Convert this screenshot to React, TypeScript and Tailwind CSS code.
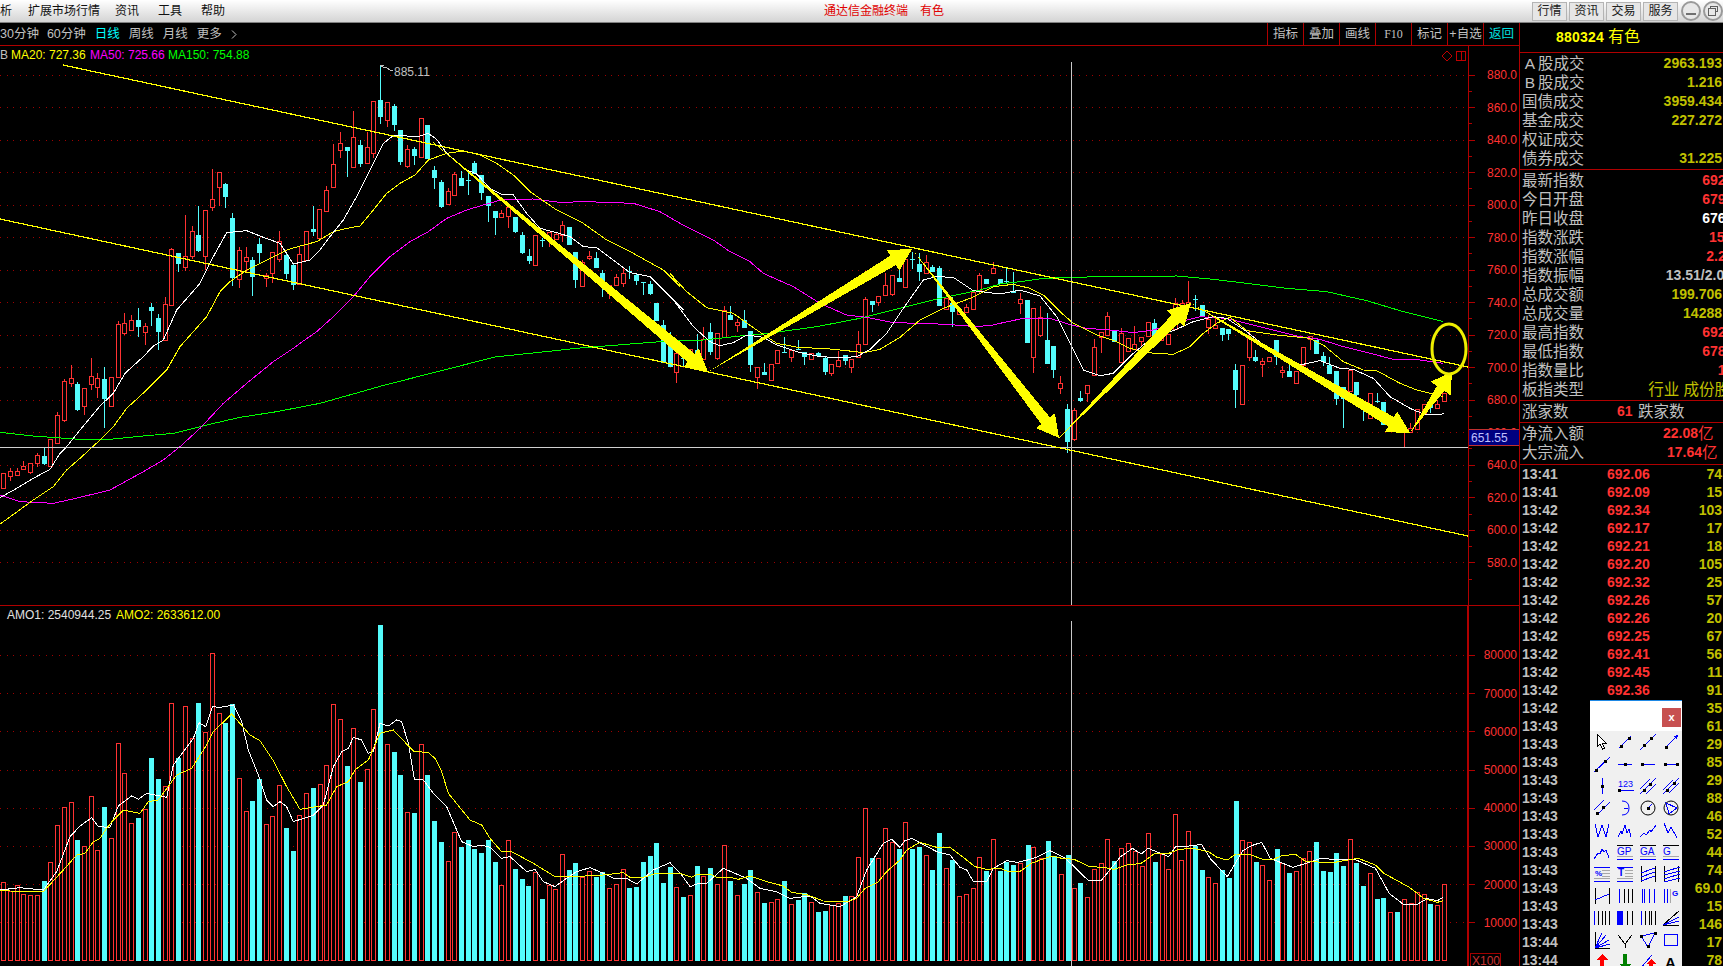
import { Fragment, type ReactNode } from "react";

// everything in the chart is in screen pixels; the numbers below were read off 3x crops,
// so each series keeps the crop origin and gets converted once
type Candle = [number, number, number, number, number, number];

const RED = "#ff3232";
const CYAN = "#54fcfc";
const LINE_RED = "#b00000";
// the right-hand volume crop came back slightly narrower than 3x
const WIDE_CROP = 1568 / 540;

function candles(x0: number, y0: number, rows: Candle[]) {
  return rows.map(([zx, hi, top, bot, lo, up]) => ({
    x: Math.round(x0 + zx / 3),
    hi: hi ? y0 + hi / 3 : 0,
    top: y0 + top / 3,
    bot: y0 + bot / 3,
    lo: lo ? y0 + lo / 3 : 0,
    up: up === 1,
  }));
}

function zoomPts(x0: number, y0: number, flat: number[], sx = 3) {
  const out: string[] = [];
  for (let i = 0; i < flat.length; i += 2) {
    out.push(`${x0 + flat[i] / sx},${y0 + flat[i + 1] / 3}`);
  }
  return out.join(" ");
}

const CANDLES = [
  ...candles(0, 160, [
    [10, 0, 940, 983, 0, 1], [31, 925, 933, 949, 962, 1], [52, 924, 934, 946, 0, 1], [70, 904, 919, 928, 0, 1],
    [91, 0, 910, 935, 941, 1], [112, 880, 884, 908, 920, 1], [133, 865, 888, 912, 915, 0], [151, 0, 838, 917, 0, 1],
    [172, 757, 766, 848, 0, 1], [193, 657, 664, 779, 785, 1], [214, 615, 655, 670, 680, 1], [232, 667, 672, 750, 752, 0],
    [253, 0, 685, 739, 765, 1], [274, 595, 649, 673, 690, 1], [292, 640, 655, 680, 713, 1], [313, 622, 657, 717, 803, 0],
    [334, 0, 652, 737, 0, 1], [355, 484, 493, 650, 0, 1], [373, 460, 490, 518, 525, 1], [394, 465, 481, 509, 512, 1],
    [415, 445, 481, 500, 530, 0], [436, 490, 499, 517, 555, 1], [454, 430, 441, 453, 498, 0], [475, 462, 474, 515, 570, 0],
    [496, 410, 433, 539, 0, 1], [514, 265, 268, 434, 0, 1], [535, 0, 280, 311, 335, 0], [556, 165, 287, 320, 332, 1],
    [577, 198, 214, 287, 298, 1], [595, 138, 226, 273, 276, 0], [616, 0, 151, 287, 330, 1], [637, 28, 118, 142, 152, 1],
    [658, 0, 37, 80, 138, 1], [676, 68, 72, 110, 143, 0], [697, 160, 174, 354, 378, 0], [718, 262, 271, 358, 384, 1],
    [739, 262, 292, 302, 340, 1], [757, 292, 300, 350, 408, 0], [778, 235, 252, 278, 310, 0], [799, 338, 346, 353, 380, 1],
    [817, 0, 277, 340, 368, 1], [838, 213, 244, 298, 305, 1], [859, 280, 285, 341, 357, 0], [880, 312, 315, 376, 390, 0],
    [898, 260, 283, 373, 0, 1], [919, 0, 214, 300, 0, 1], [940, 138, 207, 215, 228, 0], [958, 0, 148, 233, 0, 1],
  ]),
  ...candles(300, 50, [
    [79, 408, 421, 482, 0, 1], [100, 282, 343, 410, 0, 1], [121, 247, 280, 301, 323, 1], [142, 0, 292, 302, 380, 0],
    [160, 183, 262, 352, 355, 1], [181, 270, 285, 342, 350, 0], [202, 247, 292, 338, 0, 1], [220, 0, 154, 310, 325, 1],
    [241, 45, 151, 200, 222, 0], [262, 0, 157, 211, 232, 1], [283, 162, 168, 224, 243, 0], [301, 0, 240, 335, 345, 0],
    [322, 285, 298, 348, 353, 1], [343, 290, 298, 317, 345, 0], [364, 0, 205, 320, 0, 1], [382, 0, 226, 327, 0, 0],
    [403, 348, 360, 384, 417, 0], [424, 390, 396, 470, 473, 0], [445, 415, 424, 461, 0, 1], [463, 367, 372, 434, 0, 1],
    [484, 362, 384, 408, 0, 0], [505, 363, 391, 391, 435, 0], [523, 333, 339, 372, 0, 0], [544, 0, 376, 428, 450, 0],
    [565, 0, 438, 468, 515, 0], [586, 0, 484, 503, 555, 0], [604, 480, 490, 502, 0, 1], [625, 460, 470, 497, 533, 1],
    [646, 0, 501, 546, 548, 0], [667, 547, 555, 609, 612, 0], [688, 598, 618, 634, 641, 0], [706, 0, 556, 644, 0, 1],
    [727, 565, 571, 571, 590, 0], [748, 0, 546, 566, 590, 1], [769, 545, 553, 567, 0, 1], [787, 514, 526, 555, 576, 1],
    [808, 0, 531, 584, 0, 0], [826, 0, 606, 689, 713, 0], [847, 630, 637, 707, 0, 1], [868, 603, 619, 623, 630, 1],
    [889, 607, 624, 653, 0, 0], [907, 660, 670, 712, 740, 0], [928, 0, 705, 730, 748, 1], [949, 673, 682, 704, 0, 1],
    [970, 655, 670, 700, 710, 1], [988, 648, 664, 664, 688, 0], [1009, 670, 674, 692, 705, 0], [1030, 0, 697, 697, 735, 0],
    [1051, 694, 702, 731, 735, 0], [1069, 0, 759, 813, 0, 0],
  ]),
  ...candles(660, 230, [
    [10, 270, 285, 400, 0, 0], [31, 306, 322, 412, 0, 0], [49, 0, 370, 425, 460, 1], [70, 360, 383, 383, 410, 0],
    [91, 0, 358, 400, 0, 1], [112, 313, 360, 400, 0, 0], [130, 290, 326, 388, 0, 1], [151, 280, 306, 366, 375, 0],
    [172, 0, 310, 384, 390, 1], [193, 228, 241, 322, 0, 1], [211, 228, 256, 270, 0, 0], [232, 268, 276, 284, 305, 1],
    [253, 240, 270, 294, 0, 0], [271, 0, 304, 404, 425, 0], [292, 0, 412, 440, 476, 1], [313, 400, 426, 434, 0, 0],
    [334, 0, 402, 449, 0, 1], [352, 0, 361, 398, 0, 1], [373, 320, 365, 365, 0, 0], [394, 0, 360, 380, 395, 1],
    [415, 330, 356, 356, 0, 0], [433, 0, 366, 380, 405, 0], [454, 0, 370, 386, 0, 1], [475, 365, 368, 378, 0, 0],
    [496, 377, 385, 426, 435, 0], [514, 0, 403, 428, 438, 1], [535, 362, 391, 408, 412, 1], [556, 0, 376, 392, 404, 0],
    [574, 0, 386, 410, 430, 1], [595, 304, 343, 380, 0, 1], [616, 202, 208, 341, 0, 1], [637, 0, 212, 224, 245, 0],
    [655, 0, 199, 216, 228, 1], [676, 130, 166, 196, 0, 1], [697, 0, 136, 191, 198, 1], [718, 115, 144, 157, 0, 0],
    [736, 0, 88, 172, 0, 1], [757, 66, 88, 88, 118, 0], [778, 68, 102, 125, 153, 0], [799, 75, 95, 130, 0, 1],
    [817, 105, 112, 126, 0, 0], [838, 108, 114, 228, 0, 0], [859, 0, 205, 238, 0, 1], [877, 200, 220, 245, 290, 0],
    [898, 0, 240, 253, 0, 1], [919, 222, 232, 245, 0, 1], [940, 0, 187, 236, 0, 1], [958, 128, 136, 179, 188, 1],
    [979, 0, 148, 162, 0, 0], [1000, 95, 115, 128, 0, 1], [1021, 0, 148, 163, 0, 0], [1039, 112, 152, 152, 160, 0],
    [1060, 125, 182, 188, 0, 0],
  ]),
  ...candles(1000, 240, [
    [61, 160, 178, 190, 222, 1], [82, 0, 180, 308, 0, 0], [100, 0, 205, 352, 400, 1], [121, 198, 232, 285, 290, 1],
    [142, 220, 300, 372, 0, 0], [160, 0, 318, 390, 413, 0], [181, 408, 430, 443, 461, 1], [202, 492, 507, 606, 640, 0],
    [223, 505, 511, 598, 604, 1], [241, 452, 475, 484, 486, 0], [262, 0, 435, 460, 486, 1], [283, 297, 322, 404, 407, 1],
    [304, 0, 275, 292, 338, 1], [322, 216, 229, 285, 0, 1], [343, 0, 272, 307, 0, 0], [364, 265, 280, 365, 0, 1],
    [385, 0, 295, 332, 0, 1], [403, 258, 311, 328, 0, 1], [424, 0, 290, 302, 322, 1], [445, 0, 245, 288, 0, 1],
    [463, 238, 250, 288, 0, 0], [484, 0, 280, 300, 0, 1], [505, 0, 282, 312, 0, 1], [526, 175, 190, 268, 0, 1],
    [547, 180, 190, 215, 0, 1], [565, 123, 185, 195, 0, 1], [586, 165, 176, 176, 212, 0], [607, 0, 195, 232, 0, 0],
    [625, 225, 238, 260, 282, 1], [646, 235, 256, 263, 0, 1], [667, 0, 265, 285, 302, 0], [685, 0, 267, 282, 300, 0],
    [706, 372, 390, 450, 505, 0], [727, 0, 376, 491, 0, 1], [748, 270, 290, 350, 362, 1], [766, 330, 351, 362, 367, 0],
    [787, 353, 364, 371, 410, 1], [808, 0, 352, 362, 0, 1], [829, 0, 300, 350, 375, 0], [847, 378, 390, 397, 413, 1],
    [868, 375, 393, 410, 0, 0], [889, 0, 394, 428, 0, 1], [910, 0, 322, 375, 0, 1], [931, 0, 287, 297, 330, 1],
    [949, 0, 300, 343, 0, 0], [970, 337, 348, 365, 378, 0], [988, 352, 376, 402, 0, 0], [1009, 0, 393, 476, 495, 0],
    [1030, 0, 440, 478, 563, 0], [1051, 0, 390, 452, 0, 1], [1069, 0, 426, 466, 478, 0], [1090, 0, 485, 510, 543, 0],
    [1111, 0, 460, 533, 0, 1], [1132, 460, 482, 482, 490, 0], [1150, 0, 486, 555, 0, 0], [1171, 0, 530, 550, 0, 1],
    [1192, 0, 525, 560, 0, 0], [1213, 0, 560, 575, 620, 1], [1231, 548, 565, 575, 0, 1], [1252, 0, 506, 568, 0, 1],
    [1273, 0, 491, 522, 0, 1], [1291, 0, 490, 505, 520, 0], [1312, 480, 493, 503, 507, 1], [1333, 0, 460, 482, 0, 1],
  ]),
];

const MA10 = [
  zoomPts(0, 160, [0, 1013, 50, 985, 100, 955, 150, 928, 180, 880, 200, 860, 240, 810, 300, 738, 340, 700, 375, 640, 430, 590, 460, 558, 490, 540, 530, 450, 600, 370, 640, 290, 680, 218, 740, 212, 790, 232, 840, 250, 880, 312, 930, 300]),
  zoomPts(300, 50, [60, 600, 90, 560, 130, 510, 170, 440, 210, 360, 250, 280, 280, 257, 320, 258, 360, 258, 385, 250, 410, 268, 440, 310, 500, 360, 530, 372, 570, 415, 605, 433, 640, 435, 680, 490, 720, 535, 770, 548, 810, 560, 850, 590, 890, 593, 940, 630, 990, 668, 1050, 680, 1100, 730, 1150, 780]),
  zoomPts(660, 230, [40, 210, 100, 290, 150, 335, 180, 347, 220, 338, 260, 315, 310, 322, 350, 345, 420, 368, 480, 380, 540, 383, 590, 380, 630, 358, 680, 310, 730, 235, 790, 150, 830, 140, 880, 142, 940, 182, 1020, 192]),
  zoomPts(1000, 240, [60, 150, 120, 168, 170, 230, 215, 320, 250, 390, 300, 407, 340, 400, 400, 340, 460, 290, 520, 272, 580, 245, 640, 230, 680, 235, 740, 275, 810, 330, 900, 375, 960, 362, 1020, 385, 1060, 388, 1120, 415, 1170, 470, 1230, 505, 1270, 522, 1320, 525, 1332, 520]),
].join(" ");

const MA20 = [
  zoomPts(0, 160, [0, 1092, 20, 1078, 100, 1020, 160, 980, 200, 930, 240, 895, 300, 840, 340, 800, 380, 745, 440, 690, 500, 630, 540, 560, 620, 470, 660, 395, 690, 365, 740, 330, 800, 300, 860, 270]),
  zoomPts(300, 50, [0, 588, 50, 575, 100, 545, 140, 535, 180, 528, 220, 480, 260, 430, 300, 400, 345, 375, 385, 330, 440, 310, 490, 303, 540, 315, 590, 340, 640, 375, 690, 425, 770, 480, 850, 520, 920, 570, 1000, 610, 1090, 660, 1140, 710]),
  zoomPts(660, 230, [30, 130, 80, 185, 140, 233, 220, 250, 290, 300, 350, 340, 420, 353, 490, 355, 560, 362, 610, 368, 660, 358, 720, 322, 780, 270, 850, 235, 930, 205, 1000, 170]),
  zoomPts(1000, 240, [40, 133, 90, 145, 130, 165, 180, 215, 220, 250, 290, 285, 350, 305, 390, 325, 440, 338, 520, 343, 570, 320, 610, 280, 650, 250, 690, 232, 740, 272, 830, 285, 880, 290, 930, 295, 970, 315, 1030, 365, 1090, 390, 1130, 392, 1200, 430, 1250, 450, 1330, 470]),
].join(" ");

const MA50 = [
  zoomPts(0, 160, [0, 1005, 60, 1025, 160, 1030, 240, 1012, 330, 990, 430, 935, 490, 900, 540, 860, 600, 805, 670, 730, 740, 670, 820, 605, 880, 565]),
  zoomPts(300, 50, [0, 880, 50, 845, 100, 800, 160, 740, 210, 680, 270, 620, 330, 575, 385, 545, 440, 505, 500, 480, 560, 462, 610, 448, 700, 447, 780, 457, 860, 455, 1000, 460, 1080, 485, 1140, 520]),
  zoomPts(660, 230, [100, 0, 160, 30, 210, 65, 270, 95, 310, 130, 400, 170, 480, 220, 560, 255, 620, 262, 700, 278, 780, 280, 860, 283, 950, 290, 1000, 285]),
  zoomPts(1000, 240, [0, 250, 70, 235, 150, 235, 215, 255, 260, 265, 330, 270, 400, 278, 460, 270, 540, 245, 600, 230, 680, 235, 800, 265, 900, 290, 960, 298, 1030, 320, 1130, 345, 1180, 358, 1260, 360, 1330, 370]),
].join(" ");

const MA150 = [
  zoomPts(0, 160, [0, 817, 100, 828, 240, 838, 330, 838, 430, 828, 520, 820, 620, 795, 720, 772, 830, 755, 960, 730]),
  "385,385 495,357 580,348",
  zoomPts(660, 230, [0, 335, 130, 330, 240, 318, 310, 312, 470, 290, 600, 265, 720, 235, 840, 205, 960, 180]),
  zoomPts(1000, 240, [0, 132, 60, 125, 130, 115, 215, 112, 310, 110, 530, 108, 640, 118, 740, 130, 860, 145, 980, 155, 1100, 182, 1200, 212, 1330, 245]),
].join(" ");

const VOL_WHITE = [
  zoomPts(0, 590, [0, 900, 60, 893, 130, 900, 170, 845, 210, 740, 240, 708, 275, 683, 295, 710, 330, 712, 355, 648, 395, 618, 415, 628, 440, 610, 500, 622, 520, 525, 580, 445, 597, 398, 617, 410, 637, 350, 660, 352, 700, 345, 725, 395, 745, 480, 775, 555, 800, 630, 820, 650, 840, 635, 860, 650, 880, 695, 940, 676, 970, 645, 1000, 530, 1025, 485, 1045, 475, 1060, 442, 1085, 450, 1105, 490, 1120, 485, 1140, 400, 1165, 408, 1190, 390, 1205, 395, 1225, 460, 1243, 568, 1270, 570, 1300, 610, 1340, 650, 1385, 755, 1420, 770, 1445, 765]),
  zoomPts(490, 760, [0, 262, 35, 295, 60, 290, 110, 335, 135, 328, 160, 365, 195, 380, 225, 358, 260, 335, 300, 323, 340, 340, 370, 355, 410, 355, 440, 372, 490, 330, 540, 308, 575, 345, 600, 380, 625, 370, 650, 370, 700, 325, 770, 355, 810, 385, 860, 395, 900, 415, 960, 408, 990, 430, 1050, 440, 1100, 410, 1130, 330, 1180, 250, 1205, 238, 1230, 262, 1245, 242, 1265, 235, 1340, 275, 1380, 285, 1410, 322, 1430, 330, 1450, 365, 1490, 365, 1510, 325]),
  zoomPts(1000, 760, [20, 302, 50, 307, 80, 300, 110, 290, 145, 272, 190, 295, 255, 360, 295, 360, 350, 290, 385, 265, 410, 282, 430, 265, 490, 290, 510, 260, 550, 258, 585, 253, 610, 295, 660, 350, 705, 272, 730, 257, 760, 247, 785, 295, 850, 322, 895, 308, 930, 296, 980, 298, 1030, 298, 1090, 325, 1130, 400, 1170, 432, 1210, 434, 1240, 416, 1270, 422, 1287, 412], WIDE_CROP),
].join(" ");

const VOL_YELLOW = [
  zoomPts(0, 590, [0, 900, 30, 903, 130, 905, 190, 840, 230, 795, 255, 790, 280, 755, 300, 745, 320, 715, 340, 690, 370, 660, 420, 670, 445, 635, 475, 630, 530, 555, 575, 535, 620, 465, 640, 425, 695, 372, 750, 435, 780, 452, 820, 512, 860, 590, 900, 658, 980, 645, 1010, 590, 1045, 575, 1065, 540, 1105, 510, 1140, 430, 1180, 420, 1240, 483, 1285, 488, 1305, 505, 1325, 545, 1345, 610, 1410, 690, 1445, 705]),
  zoomPts(490, 760, [0, 235, 35, 275, 65, 275, 130, 310, 195, 350, 250, 350, 340, 345, 400, 338, 420, 352, 460, 352, 500, 340, 570, 340, 605, 352, 625, 342, 660, 342, 680, 352, 720, 352, 745, 358, 780, 348, 830, 365, 880, 378, 905, 397, 950, 404, 1000, 423, 1070, 425, 1100, 415, 1125, 385, 1165, 365, 1190, 335, 1230, 300, 1250, 270, 1290, 247, 1340, 262, 1380, 262, 1420, 292, 1455, 320, 1490, 328, 1530, 325]),
  zoomPts(1000, 760, [20, 333, 60, 333, 90, 310, 150, 288, 180, 295, 215, 298, 260, 320, 300, 322, 330, 328, 370, 315, 410, 310, 450, 280, 490, 280, 520, 268, 560, 265, 605, 275, 630, 292, 660, 300, 685, 282, 725, 283, 760, 297, 790, 300, 820, 286, 860, 284, 885, 303, 960, 309, 1040, 295, 1090, 315, 1115, 340, 1150, 360, 1190, 383, 1230, 415, 1270, 427, 1287, 422], WIDE_CROP),
].join(" ");

// [crop x, crop y of the bar top, 1 = red outline]
const VOL_BARS: { x: number; top: number; up: boolean }[] = [
  ...volGroup(0, 590, [10, 875, 1, 30, 903, 1, 52, 884, 1, 70, 913, 1, 91, 916, 1, 112, 916, 1, 133, 873, 0, 151, 815, 1, 172, 706, 1, 193, 650, 1, 214, 635, 1, 232, 750, 0, 253, 769, 1, 274, 617, 1, 292, 781, 1, 313, 651, 0, 334, 745, 1, 355, 458, 1, 373, 550, 1, 394, 700, 1, 415, 684, 0, 436, 658, 1, 454, 504, 0, 475, 567, 0, 496, 588, 1, 514, 340, 1, 535, 504, 0, 556, 349, 1, 577, 445, 1, 595, 339, 0, 616, 427, 1, 637, 190, 1, 658, 370, 1, 676, 400, 0, 697, 342, 0, 718, 565, 1, 739, 664, 1, 757, 633, 0, 778, 567, 0, 799, 703, 1, 817, 679, 1, 838, 586, 1, 859, 714, 0, 880, 783, 0, 898, 676, 1, 919, 610, 1, 940, 594, 0, 961, 583, 1, 979, 526, 1, 1000, 343, 1, 1021, 388, 1, 1042, 528, 0, 1060, 415, 1, 1081, 576, 0, 1102, 538, 1, 1120, 358, 1, 1141, 105, 0, 1162, 463, 1, 1183, 486, 0, 1201, 555, 0, 1222, 667, 1, 1243, 669, 0, 1264, 463, 1, 1282, 555, 0, 1303, 693, 0, 1324, 756, 0, 1345, 814, 1, 1363, 727, 1, 1384, 771, 0, 1405, 750, 0, 1423, 777, 0, 1444, 789, 0, 1465, 750, 0]),
  ...volGroup(490, 760, [16, 306, 0, 34, 376, 1, 55, 241, 1, 76, 327, 0, 97, 357, 0, 115, 378, 0, 136, 336, 1, 157, 417, 0, 178, 376, 1, 196, 388, 1, 217, 283, 1, 238, 330, 0, 256, 309, 0, 277, 352, 1, 298, 334, 1, 319, 350, 0, 337, 336, 0, 358, 385, 1, 379, 373, 1, 400, 328, 1, 418, 384, 0, 439, 381, 0, 460, 306, 0, 481, 288, 0, 499, 249, 0, 520, 369, 0, 541, 321, 0, 559, 382, 1, 580, 411, 0, 601, 406, 1, 622, 318, 0, 640, 349, 1, 661, 324, 0, 682, 373, 1, 703, 256, 1, 721, 363, 0, 742, 406, 1, 763, 372, 0, 781, 330, 0, 802, 397, 1, 823, 429, 0, 844, 427, 1, 862, 418, 1, 883, 363, 0, 904, 433, 1, 925, 420, 0, 943, 400, 0, 964, 427, 1, 985, 456, 0, 1006, 453, 0, 1024, 435, 1, 1045, 430, 1, 1066, 408, 0, 1084, 409, 1, 1105, 292, 1, 1126, 145, 1, 1147, 294, 0, 1165, 295, 1, 1186, 205, 1, 1207, 247, 1, 1228, 267, 0, 1246, 187, 1, 1267, 267, 0, 1288, 261, 0, 1309, 286, 1, 1327, 330, 0, 1348, 219, 0, 1369, 325, 1, 1387, 300, 0, 1408, 409, 1, 1429, 403, 1, 1450, 385, 1, 1468, 292, 1, 1489, 333, 0, 1510, 238, 1, 1531, 333, 0]),
  ...volGroup(1000, 760, [18, 306, 0, 39, 316, 0, 59, 310, 1, 80, 255, 0, 97, 262, 1, 118, 295, 1, 138, 243, 0, 156, 287, 0, 176, 343, 1, 196, 285, 0, 216, 385, 1, 233, 369, 0, 254, 412, 1, 274, 327, 1, 294, 310, 1, 312, 238, 1, 332, 303, 0, 352, 265, 1, 372, 250, 1, 391, 273, 1, 411, 319, 1, 431, 220, 1, 449, 306, 0, 469, 282, 1, 489, 328, 1, 509, 163, 1, 527, 301, 1, 547, 214, 1, 567, 257, 0, 587, 330, 0, 605, 352, 1, 625, 370, 1, 646, 330, 0, 664, 354, 0, 684, 123, 0, 704, 241, 1, 724, 246, 1, 742, 306, 0, 762, 316, 1, 782, 361, 1, 803, 267, 0, 820, 310, 1, 840, 339, 0, 860, 334, 1, 880, 295, 1, 898, 274, 1, 918, 246, 0, 939, 333, 0, 957, 336, 0, 977, 279, 0, 997, 318, 0, 1017, 238, 1, 1035, 309, 0, 1055, 378, 0, 1075, 340, 1, 1096, 417, 0, 1113, 414, 0, 1133, 457, 1, 1153, 456, 0, 1174, 418, 1, 1192, 430, 1, 1212, 397, 1, 1232, 403, 1, 1250, 432, 0, 1270, 436, 1, 1290, 373, 1], WIDE_CROP),
];

function volGroup(x0: number, y0: number, flat: number[], sx = 3) {
  const out: { x: number; top: number; up: boolean }[] = [];
  for (let i = 0; i < flat.length; i += 3) {
    out.push({ x: Math.round(x0 + flat[i] / sx), top: Math.round(y0 + flat[i + 1] / 3), up: flat[i + 2] === 1 });
  }
  return out;
}

function arrowPoints(sx: number, sy: number, tx: number, ty: number, shaft = 11, head = 22, wide = 24) {
  const len = Math.hypot(tx - sx, ty - sy);
  const dx = (tx - sx) / len;
  const dy = (ty - sy) / len;
  const nx = tx - dx * head;
  const ny = ty - dy * head;
  return [
    [sx, sy],
    [nx - (dy * shaft) / 2, ny + (dx * shaft) / 2],
    [nx - (dy * wide) / 2, ny + (dx * wide) / 2],
    [tx, ty],
    [nx + (dy * wide) / 2, ny - (dx * wide) / 2],
    [nx + (dy * shaft) / 2, ny - (dx * shaft) / 2],
  ]
    .map((p) => p.join(","))
    .join(" ");
}

const ARROWS = [
  arrowPoints(428, 138, 708, 372),
  arrowPoints(708, 372, 912, 249),
  arrowPoints(912, 249, 1059, 438),
  arrowPoints(1059, 438, 1191, 303),
  arrowPoints(1191, 303, 1410, 433),
  arrowPoints(1410, 433, 1452, 372, 9, 20, 24),
];

const PRICE_Y = (p: number) => 74.5 + (880 - p) * 1.626;
const PRICES = Array.from({ length: 16 }, (_, i) => 880 - i * 20);
const VOL_Y = (v: number) => 960.5 - (v / 10000) * 38.2;
const VOLS = [80000, 70000, 60000, 50000, 40000, 30000, 20000, 10000];

function PriceChart() {
  return (
    <svg width={1519} height={559} viewBox="0 46 1519 559" shapeRendering="crispEdges" className="block">
      {PRICES.map((p) => (
        <line key={p} x1={0} x2={1468} y1={Math.round(PRICE_Y(p)) + 0.5} y2={Math.round(PRICE_Y(p)) + 0.5} stroke="#a00000" strokeDasharray="1 5.5" />
      ))}
      <line x1={1468.5} x2={1468.5} y1={46} y2={605} stroke={LINE_RED} />
      {PRICES.map((p) => (
        <Fragment key={p}>
          <line x1={1468} x2={1475} y1={Math.round(PRICE_Y(p)) + 0.5} y2={Math.round(PRICE_Y(p)) + 0.5} stroke={LINE_RED} />
          <line x1={1468} x2={1472} y1={Math.round(PRICE_Y(p - 10)) + 0.5} y2={Math.round(PRICE_Y(p - 10)) + 0.5} stroke={LINE_RED} />
          <text x={1517} y={PRICE_Y(p) + 4.5} textAnchor="end" fontSize={12} fill={RED} fontFamily="'Liberation Sans',sans-serif">
            {p}.0
          </text>
        </Fragment>
      ))}

      {CANDLES.map((c, i) => {
        const color = c.up ? RED : CYAN;
        const x = c.x + 0.5;
        const top = Math.round(c.top);
        const h = Math.max(Math.round(c.bot) - top, 1);
        return (
          <Fragment key={i}>
            {c.hi > 0 && <line x1={x} x2={x} y1={c.hi} y2={top} stroke={color} />}
            {c.lo > 0 && <line x1={x} x2={x} y1={top + h} y2={c.lo} stroke={color} />}
            {c.up ? (
              <rect x={c.x - 2 + 0.5} y={top + 0.5} width={4} height={h} fill="#000" stroke={color} />
            ) : (
              <rect x={c.x - 2} y={top} width={5} height={h} fill={color} />
            )}
          </Fragment>
        );
      })}

      <polyline points={MA150} fill="none" stroke="#00ff00" />
      <polyline points={MA50} fill="none" stroke="#ff00ff" />
      <polyline points={MA20} fill="none" stroke="#ffff00" />
      <polyline points={MA10} fill="none" stroke="#ffffff" />

      <line x1={0} x2={1468} y1={447.5} y2={447.5} stroke="#d0d0d0" />
      <line x1={1071.5} x2={1071.5} y1={62} y2={605} stroke="#c8c8c8" />

      <line x1={63} y1={65} x2={1468} y2={367} stroke="#ffff00" strokeWidth={1.2} />
      <line x1={0} y1={219} x2={1468} y2={536} stroke="#ffff00" strokeWidth={1.2} />
      {ARROWS.map((pts) => (
        <polygon key={pts} points={pts} fill="#ffff00" />
      ))}
      <ellipse cx={1449} cy={349} rx={17} ry={25} fill="none" stroke="#eeee00" strokeWidth={3} shapeRendering="auto" />

      {/* high marker */}
      <path d="M380.5 66v-1h3M381 66.5l6 1.5 4 2.5 2 .5" fill="none" stroke="#c0c0c0" />
      <text x={394} y={76} fontSize={12} fill="#c0c0c0" fontFamily="'Liberation Sans',sans-serif">
        885.11
      </text>

      <path d="M1447 51l5 5-5 5-5-5z" fill="none" stroke="#c00000" shapeRendering="auto" />
      <rect x={1456.5} y={51.5} width={9} height={9} fill="none" stroke="#c00000" />
      <line x1={1461.5} x2={1461.5} y1={51} y2={61} stroke="#c00000" />
    </svg>
  );
}

function VolumeChart() {
  return (
    <svg width={1519} height={360} viewBox="0 606 1519 360" shapeRendering="crispEdges" className="block">
      {VOLS.map((v) => (
        <line key={v} x1={0} x2={1468} y1={Math.round(VOL_Y(v)) + 0.5} y2={Math.round(VOL_Y(v)) + 0.5} stroke="#a00000" strokeDasharray="1 5.5" />
      ))}
      <line x1={1468} x2={1468} y1={606} y2={966} stroke={LINE_RED} strokeWidth={2} />
      {VOLS.map((v) => (
        <Fragment key={v}>
          <line x1={1468} x2={1475} y1={Math.round(VOL_Y(v)) + 0.5} y2={Math.round(VOL_Y(v)) + 0.5} stroke={LINE_RED} />
          <text x={1517} y={VOL_Y(v) + 4.5} textAnchor="end" fontSize={12} fill={RED} fontFamily="'Liberation Sans',sans-serif">
            {v}
          </text>
        </Fragment>
      ))}

      {VOL_BARS.map((b, i) =>
        b.up ? (
          <rect key={i} x={b.x - 1.5} y={b.top + 0.5} width={4} height={960 - b.top} fill="#000" stroke={RED} />
        ) : (
          <rect key={i} x={b.x - 2} y={b.top} width={5} height={961 - b.top} fill={CYAN} />
        ),
      )}

      <polyline points={VOL_WHITE} fill="none" stroke="#ffffff" />
      <polyline points={VOL_YELLOW} fill="none" stroke="#ffff00" />
      <line x1={1071.5} x2={1071.5} y1={621} y2={966} stroke="#c8c8c8" />

      <rect x={1470.5} y={953.5} width={30} height={14} fill="#000" stroke="#a00000" />
      <text x={1472} y={964.5} fontSize={12} fill="#c83232" fontFamily="'Liberation Sans',sans-serif">
        X100
      </text>
    </svg>
  );
}

const B = "#0000ff";
const K = "#000000";
const G = "#a8a8a8";

function ln(x1: number, y1: number, x2: number, y2: number, c = B, w = 1) {
  return <line x1={x1} y1={y1} x2={x2} y2={y2} stroke={c} strokeWidth={w} />;
}

function dot(x: number, y: number) {
  return <rect x={x - 1.5} y={y - 1.5} width={3} height={3} fill={K} />;
}

function vbars(rows: [number, string, number?][]) {
  return rows.map(([x, c, w]) => <Fragment key={x}>{ln(x, 2, x, 16, c, w ?? 1)}</Fragment>);
}

const mini = "10px";

const TOOL_ICONS: ReactNode[] = [
  <path d="M4 1v13l3-3 2.500 5 2-1-2.500-5h4z" fill="#fff" stroke={K} />,
  <>{ln(3, 15, 15, 3)}{dot(5, 13)}{dot(13, 5)}</>,
  <>{ln(1, 17, 17, 1)}{dot(5.500, 12.500)}{dot(12.500, 5.500)}</>,
  <>{ln(3, 15, 16, 2)}<path d="M16 2l-5 1 4 4z" fill={B} />{dot(4, 14)}</>,

  <>{ln(1, 17, 17, 2)}{dot(3, 15)}{dot(12, 6.500)}</>,
  <>{ln(2, 9, 16, 9)}{dot(9, 9)}</>,
  <>{ln(3, 9, 16, 9)}{dot(3, 9)}</>,
  <>{ln(3, 9, 15, 9)}{dot(3, 9)}{dot(15, 9)}</>,

  <>{ln(9, 1, 9, 17)}{dot(9, 9)}</>,
  <>
    <text x={2} y={10} fontSize="9px" fill={B} fontFamily="'Liberation Sans',sans-serif">123</text>
    {ln(3, 13, 18, 13)}{dot(3, 13)}
  </>,
  <>{ln(1, 12, 11, 2)}{ln(1, 17, 17, 1)}{ln(7, 17, 17, 7)}{dot(5, 13)}{dot(11, 7)}</>,
  <>{ln(1, 13, 11, 3)}{ln(1, 17, 17, 1)}{ln(7, 16, 17, 6)}{dot(5, 13)}{dot(12, 6)}</>,

  <>{ln(1, 11, 11, 1)}{ln(5, 15, 17, 3)}{dot(4, 14)}{dot(10, 8)}</>,
  <>
    <path d="M6 2q7 0 7 7t-7 7" fill="none" stroke={B} shapeRendering="auto" />
    {ln(8, 9, 12, 9)}
  </>,
  <>
    <circle cx={9} cy={9} r={7} fill="none" stroke={K} shapeRendering="auto" />
    {ln(9, 9, 13, 5)}{dot(9, 9)}
  </>,
  <>
    <circle cx={9} cy={9} r={7} fill="none" stroke={K} shapeRendering="auto" />
    <path d="M4 4l11 5-8 6z" fill="none" stroke={B} />
  </>,

  <path d="M2 3l3 13 4-12 4 12 3-13" fill="none" stroke={B} />,
  <path d="M2 16l3-6 1 3 3-9 2 8 2-4 2 8" fill="none" stroke={B} />,
  <path d="M1 16l4-4 2 2 4-5 1 2 5-7" fill="none" stroke={B} />,
  <path d="M2 2l4 10 3-6 6 11" fill="none" stroke={B} />,

  <path d="M1 16l4-6 2 1 2-5 2 3 2-2 3 8" fill="none" stroke={B} />,
  <>
    {ln(1, 2, 17, 2, K)}
    <text x={1} y={12} fontSize={mini} fill={B} fontFamily="'Liberation Sans',sans-serif">GP</text>
    {ln(1, 13, 17, 13, G)}{ln(1, 16, 17, 16)}
  </>,
  <>
    {ln(1, 2, 17, 2, K)}
    <text x={1} y={12} fontSize={mini} fill={B} fontFamily="'Liberation Sans',sans-serif">GA</text>
    {ln(1, 13, 17, 13, G)}{ln(1, 16, 17, 16)}
  </>,
  <>
    {ln(1, 2, 17, 2, K)}
    <text x={1} y={12} fontSize={mini} fill={B} fontFamily="'Liberation Sans',sans-serif">G</text>
    {ln(1, 13, 17, 13, G)}{ln(1, 16, 17, 16)}
  </>,

  <>
    {ln(1, 2, 17, 2)}{ln(9, 5, 17, 5, G)}{ln(9, 8, 17, 8, G)}{ln(9, 11, 17, 11, G)}{ln(1, 13, 17, 13, G)}{ln(1, 16, 17, 16)}
    <text x={2} y={11} fontSize="8px" fontWeight="bold" fill={B} fontFamily="'Liberation Sans',sans-serif">%</text>
  </>,
  <>
    {ln(1, 2, 17, 2)}{ln(9, 5, 17, 5, G)}{ln(9, 8, 17, 8, G)}{ln(9, 11, 17, 11, G)}{ln(1, 13, 17, 13, G)}{ln(1, 16, 17, 16)}
    <text x={2} y={11} fontSize={mini} fontWeight="bold" fill={B} fontFamily="'Liberation Sans',sans-serif">T</text>
  </>,
  <>{ln(2, 1, 2, 17, K)}{ln(16, 1, 16, 17, K)}{ln(2, 8, 16, 3)}{ln(2, 12, 16, 7)}{ln(2, 16, 16, 11)}</>,
  <>{ln(2, 1, 2, 17, K)}{ln(16, 1, 16, 17, K)}{ln(2, 7, 18, 2)}{ln(2, 10, 18, 6)}{ln(2, 14, 18, 9)}{ln(2, 17, 18, 13)}</>,

  <>{ln(2, 1, 2, 17, K)}{ln(16, 1, 16, 17, K)}{ln(2, 13, 16, 7)}</>,
  <>{vbars([[3, B], [8, K], [12, K], [16, K]])}</>,
  <>{vbars([[3, B], [5, B], [10, B], [15, B]])}</>,
  <>
    {vbars([[2, B], [5, B], [8, G]])}
    <text x={10} y={9} fontSize="8px" fontWeight="bold" fill={B} fontFamily="'Liberation Sans',sans-serif">G</text>
  </>,

  <>{vbars([[1, B], [5, K], [9, K], [12, K], [16, K]])}</>,
  <>{vbars([[2, B, 2], [4, B, 2], [6, B, 2], [11, K], [16, K]])}</>,
  <>{vbars([[2, B], [6, K], [10, K], [12, K], [16, K]])}</>,
  <>{ln(1, 16, 17, 2, K)}{ln(1, 16, 17, 8)}{ln(1, 16, 17, 12)}{ln(1, 16, 17, 16, K)}</>,

  <>{ln(2, 1, 2, 17, K)}{ln(2, 17, 17, 17, K)}{ln(2, 17, 9, 2)}{ln(2, 17, 13, 4)}{ln(2, 17, 16, 9)}{ln(2, 17, 17, 13)}</>,
  <path d="M2 4l7 9 7-9M9 13v4" fill="none" stroke={K} />,
  <>
    <path d="M2 5l14-3-7 14z" fill="none" stroke={B} />
    {dot(2, 5)}{dot(16, 2)}{dot(9, 15)}
  </>,
  <rect x={2.500} y={3.500} width={13} height={11} fill="none" stroke={B} />,

  <path d="M9 1l6 6h-4v10h-4v-10h-4z" fill="#ff0000" />,
  <path d="M9 17l6-6h-4v-10h-4v10h-4z" fill="#008000" />,
  <>{ln(1, 16, 13, 2)}{dot(3, 14)}<path d="M12 6l5 5h-3v4h-4v-4h-3z" fill="#ff0000" /></>,
  <>
    <text x={3} y={15} fontSize="15px" fontWeight="bold" fill={K} fontFamily="'Liberation Sans',sans-serif">A</text>
  </>,
];

function ToolPalette() {
  return (
    <div className="absolute left-[1590px] top-[700px] h-[266px] w-[92px] overflow-hidden border-t border-[#1e88e5] bg-[#f0f0f0]">
      <div className="flex h-[30px] items-start justify-end bg-white pr-px pt-[7px]">
        <div className="flex h-[19px] w-[19px] items-center justify-center bg-[#c75050] text-[11px] font-bold leading-none text-white">x</div>
      </div>
      <div className="grid grid-cols-4 pl-px">
        {TOOL_ICONS.map((icon, i) => (
          <div key={i} className="flex h-[22px] items-center justify-center">
            <svg width={18} height={18} viewBox="0 0 18 18" shapeRendering="crispEdges">
              {icon}
            </svg>
          </div>
        ))}
      </div>
    </div>
  );
}

const STATS_TOP = [
  { label: "股成交", latin: "A", value: "2963.193" },
  { label: "股成交", latin: "B", value: "1.216" },
  { label: "国债成交", value: "3959.434" },
  { label: "基金成交", value: "227.272" },
  { label: "权证成交", value: "" },
  { label: "债券成交", value: "31.225" },
];

const STATS_MID = [
  { label: "最新指数", value: "692.36", color: "text-[#ff3232]", cut: "-mr-[23px]" },
  { label: "今日开盘", value: "679.45", color: "text-[#ff3232]", cut: "-mr-[23px]" },
  { label: "昨日收盘", value: "676.86", color: "text-white", cut: "-mr-[23px]" },
  { label: "指数涨跌", value: "15.50", color: "text-[#ff3232]", cut: "-mr-[22px]" },
  { label: "指数涨幅", value: "2.29%", color: "text-[#ff3232]", cut: "-mr-[24px]" },
  { label: "指数振幅", value: "13.51/2.05", color: "text-[#c0c0c0]", cut: "-mr-[10px]" },
  { label: "总成交额", value: "199.706", color: "text-[#c0c000]", cut: "" },
  { label: "总成交量", value: "14288", color: "text-[#c0c000]", cut: "" },
  { label: "最高指数", value: "692.45", color: "text-[#ff3232]", cut: "-mr-[23px]" },
  { label: "最低指数", value: "678.94", color: "text-[#ff3232]", cut: "-mr-[23px]" },
  { label: "指数量比", value: "1.12", color: "text-[#ff3232]", cut: "-mr-[23px]" },
];

const TICKS: [string, string, string][] = [
  ["13:41", "692.06", "74"], ["13:41", "692.09", "15"], ["13:42", "692.34", "103"], ["13:42", "692.17", "17"],
  ["13:42", "692.21", "18"], ["13:42", "692.20", "105"], ["13:42", "692.32", "25"], ["13:42", "692.26", "57"],
  ["13:42", "692.26", "20"], ["13:42", "692.25", "67"], ["13:42", "692.41", "56"], ["13:42", "692.45", "11"],
  ["13:42", "692.36", "91"], ["13:42", "692.33", "35"], ["13:43", "692.30", "61"], ["13:43", "692.31", "29"],
  ["13:43", "692.28", "85"], ["13:43", "692.27", "29"], ["13:43", "692.30", "88"], ["13:43", "692.32", "46"],
  ["13:43", "692.35", "52"], ["13:43", "692.34", "44"], ["13:43", "692.36", "74"], ["13:43", "692.33", "69.0"],
  ["13:43", "692.35", "15"], ["13:43", "692.36", "146"], ["13:44", "692.38", "17"], ["13:44", "692.36", "78"],
];

function SidePanel() {
  return (
    <aside className="h-[943px] w-[204px] shrink-0 overflow-hidden border-l border-[#b00000]">
      <div className="flex h-[30px] items-center justify-start border-b border-[#b00000] pl-[36px] pb-px text-[#ffff00]">
        <span className="text-[14px] font-bold tracking-[0.2px]">880324</span>
        <span className="ml-[4px] text-[16px]">有色</span>
      </div>

      <div className="h-[117px] border-b border-[#b00000] pt-px">
        {STATS_TOP.map((r, i) => (
          <div key={i} className="flex h-[19px] items-center justify-between pl-[2px] pr-[1px]">
            <span className="text-[15.5px] leading-none text-[#c0c0c0]">
              {r.latin && <span className="inline-block w-[16px] text-center">{r.latin}</span>}
              {r.label}
            </span>
            <span className="text-[14px] font-bold text-[#c0c000]">{r.value}</span>
          </div>
        ))}
      </div>

      <div className="h-[231px] border-b border-[#b00000] pt-px">
        {STATS_MID.map((r) => (
          <div key={r.label} className="flex h-[19px] items-center justify-between pl-[2px] pr-[1px]">
            <span className="text-[15.5px] leading-none text-[#c0c0c0]">{r.label}</span>
            <span className={`text-[14px] font-bold ${r.color} ${r.cut}`}>{r.value}</span>
          </div>
        ))}
        <div className="flex h-[19px] items-center justify-between pl-[2px] pr-[1px]">
          <span className="text-[15.5px] leading-none text-[#c0c0c0]">板指类型</span>
          <span className="-mr-[8px] whitespace-nowrap text-[15.5px] leading-none text-[#c0c000]">行业 成份股</span>
        </div>
      </div>

      <div className="flex h-[22px] items-center border-b border-[#b00000] pl-[2px]">
        <span className="w-[95px] text-[15.5px] leading-none text-[#c0c0c0]">涨家数</span>
        <span className="w-[21px] text-[14px] font-bold text-[#ff3232]">61</span>
        <span className="text-[15.5px] leading-none text-[#c0c0c0]">跌家数</span>
      </div>

      <div className="h-[42px] border-b border-[#b00000] pt-px">
        <div className="flex h-[19px] items-center pl-[2px]">
          <span className="w-[141px] text-[15.5px] leading-none text-[#c0c0c0]">净流入额</span>
          <span className="text-[14px] font-bold text-[#ff3232]">22.08</span>
          <span className="text-[15.5px] leading-none text-[#ff3232]">亿</span>
        </div>
        <div className="flex h-[19px] items-center pl-[2px]">
          <span className="w-[145px] text-[15.5px] leading-none text-[#c0c0c0]">大宗流入</span>
          <span className="text-[14px] font-bold text-[#ff3232]">17.64</span>
          <span className="text-[15.5px] leading-none text-[#ff3232]">亿</span>
        </div>
      </div>

      <div>
        {TICKS.map(([t, p, v], i) => (
          <div key={i} className="flex h-[18px] items-center pl-[2px] pr-[1px] text-[14px] font-bold leading-none">
            <span className="w-[85px] text-[#c0c0c0]">{t}</span>
            <span className="text-[#ff3232]">{p}</span>
            <span className="ml-auto text-[#c0c000]">{v}</span>
          </div>
        ))}
      </div>
    </aside>
  );
}

function TitleButton({ label }: { label: string }) {
  return (
    <div className="flex h-[19px] w-[35px] items-center justify-center border border-[#b4b4b4] bg-[#e6e6e6] text-[12px] text-[#202020]">
      {label}
    </div>
  );
}

function TitleBar() {
  return (
    <header className="flex h-[23px] items-center overflow-hidden border-b border-[#808080] bg-gradient-to-b from-white to-[#d4d4d4] text-[12px] text-[#111]">
      <span>析</span>
      <span className="ml-[16px]">扩展市场行情</span>
      <span className="ml-[15px]">资讯</span>
      <span className="ml-[19px]">工具</span>
      <span className="ml-[19px]">帮助</span>
      <span className="ml-[599px] text-[#e00000]">通达信金融终端</span>
      <span className="ml-[12px] text-[#e00000]">有色</span>
      <div className="ml-auto flex items-center gap-[2px]">
        <TitleButton label="行情" />
        <TitleButton label="资讯" />
        <TitleButton label="交易" />
        <TitleButton label="服务" />
        <div className="ml-[1px] flex h-[20px] w-[20px] items-center justify-center rounded-full border-2 border-[#9a9a9a] bg-[#e8e8e8]">
          <div className="mt-[5px] h-[2px] w-[10px] bg-[#707070]" />
        </div>
        <div className="flex h-[20px] w-[20px] items-center justify-center rounded-full border-2 border-[#9a9a9a] bg-[#e8e8e8]">
          <svg width={12} height={12} viewBox="0 0 12 12" shapeRendering="crispEdges">
            <path d="M3.500 3.500v-2h7v5h-2M1.500 3.500h7v7h-7z" fill="none" stroke="#606060" />
          </svg>
        </div>
      </div>
    </header>
  );
}

const TOOL_BUTTONS = ["指标", "叠加", "画线", "F10", "标记", "+自选"];

function Toolbar() {
  return (
    <div className="flex h-[23px] items-stretch border-b border-[#b00000] text-[12.5px] text-[#c0c0c0]">
      <div className="flex items-center">
        <span>30分钟</span>
        <span className="ml-[8px]">60分钟</span>
        <span className="ml-[9px] text-[#00ffff]">日线</span>
        <span className="ml-[9px]">周线</span>
        <span className="ml-[9px]">月线</span>
        <span className="ml-[9px]">更多</span>
        <span className="ml-[9px]">
          <svg width={6} height={9} viewBox="0 0 6 9" className="block">
            <path d="M1 .5l4 4-4 4" fill="none" stroke="#c0c0c0" />
          </svg>
        </span>
      </div>
      <div className="ml-auto flex">
        {TOOL_BUTTONS.map((b) => (
          <div key={b} className="flex w-[36px] items-center justify-center border-l border-[#b00000]">
            {b === "F10" ? <span className="font-['Liberation_Serif',serif] text-[12px]">F10</span> : b}
          </div>
        ))}
        <div className="flex w-[36px] items-center justify-center border-l border-[#b00000] text-[#00e0e0]">返回</div>
      </div>
    </div>
  );
}

export default function App() {
  return (
    <div className="relative h-[966px] w-[1723px] overflow-hidden bg-black font-['Liberation_Sans','Noto_Sans_CJK_SC',sans-serif]">
      <TitleBar />
      <div className="flex">
        <main className="w-[1519px] shrink-0">
          <Toolbar />
          <div className="relative h-[560px] border-b border-[#b00000]">
            <PriceChart />
            <div className="absolute left-0 top-[1px] flex h-[16px] items-center text-[12px]">
              <span className="w-[11px] text-[#c0c0c0]">B</span>
              <span className="w-[79px] text-[#ffff00]">MA20: 727.36</span>
              <span className="w-[78px] text-[#ff00ff]">MA50: 725.66</span>
              <span className="text-[#00ff00]">MA150: 754.88</span>
            </div>
            <div className="absolute left-[1469px] top-[383px] flex h-[17px] w-[50px] items-center border-y border-[#c03030] bg-[#000080] pl-[2px] text-[12px] text-[#c0c0ff]">
              651.55
            </div>
          </div>
          <div className="relative h-[360px]">
            <VolumeChart />
            <div className="absolute left-[7px] top-[1px] flex h-[16px] items-center text-[12px]">
              <span className="w-[109px] text-[#e0e0e0]">AMO1: 2540944.25</span>
              <span className="text-[#ffff00]">AMO2: 2633612.00</span>
            </div>
          </div>
        </main>
        <SidePanel />
      </div>
      <ToolPalette />
    </div>
  );
}
